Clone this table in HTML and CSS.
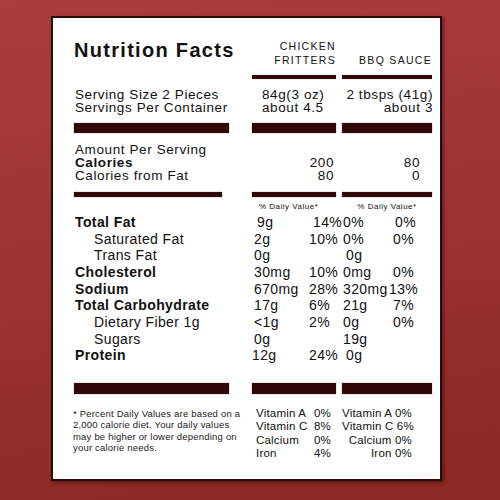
FILE: index.html
```html
<!doctype html>
<html lang="en">
  <head>
    <meta charset="UTF-8" />
    <title>Nutrition Facts</title>
    <link rel="stylesheet" href="styles.css">
  </head>

  <body>
    <div class="card">
      <div class="row head">
        <h1 class="c1 title">Nutrition Facts</h1>
        <div class="c2 colhead">CHICKEN<br />FRITTERS</div>
        <div class="c3 colhead bottom">BBQ SAUCE</div>
      </div>
      <div class="row gap_thin">
        <div class="c1"></div>
        <div class="c2 bar bar_thin"></div>
        <div class="c3 bar bar_thin"></div>
      </div>

      <div class="row serving">
        <div class="c1 label">Serving Size 2 Pieces<br />Servings Per Container</div>
        <div class="c2 serv_val">84g(3 oz)<br />about 4.5</div>
        <div class="c3 right">2 tbsps (41g)<br />about 3</div>
      </div>
      <div class="row gap_thick">
        <div class="c1 bar bar_thick"></div>
        <div class="c2 bar bar_thick"></div>
        <div class="c3 bar bar_thick"></div>
      </div>

      <div class="row calories">
        <div class="c1 label">
          Amount Per Serving<br /><b>Calories</b><br />Calories from Fat
        </div>
        <div class="c2 right cal2"><br />200<br />80</div>
        <div class="c3 right cal3"><br />80<br />0</div>
      </div>
      <div class="row gap_mid">
        <div class="c1"><div class="bar bar_mid short"></div></div>
        <div class="c2 bar bar_mid"></div>
        <div class="c3 bar bar_mid"></div>
      </div>

      <div class="row dv">
        <div class="c1"></div>
        <div class="c2 dv2">% Daily Value*</div>
        <div class="c3 dv3">% Daily Value*</div>
      </div>

      <div class="nutrients">
        <div class="nrow"><span class="name bold">Total Fat</span><span class="first">9g</span><span class="pct_first">14%</span><span>0%</span><span class="pct_bbq">0%</span></div>
        <div class="nrow"><span class="name sub">Saturated Fat</span><span>2g</span><span>10%</span><span>0%</span><span class="pct_bbq shift">0%</span></div>
        <div class="nrow"><span class="name sub">Trans Fat</span><span>0g</span><span></span><span class="nudge">0g</span><span></span></div>
        <div class="nrow"><span class="name bold">Cholesterol</span><span>30mg</span><span>10%</span><span>0mg</span><span class="pct_bbq shift">0%</span></div>
        <div class="nrow"><span class="name bold">Sodium</span><span>670mg</span><span>28%</span><span>320mg</span><span class="pct_bbq wide">13%</span></div>
        <div class="nrow"><span class="name bold">Total Carbohydrate</span><span>17g</span><span>6%</span><span>21g</span><span class="pct_bbq shift">7%</span></div>
        <div class="nrow"><span class="name sub">Dietary Fiber 1g</span><span>&lt;1g</span><span>2%</span><span>0g</span><span class="pct_bbq shift">0%</span></div>
        <div class="nrow"><span class="name sub">Sugars</span><span>0g</span><span></span><span>19g</span><span></span></div>
        <div class="nrow"><span class="name bold">Protein</span><span class="back">12g</span><span>24%</span><span class="nudge">0g</span><span></span></div>
      </div>
      <div class="row gap_bottom">
        <div class="c1 bar bar_bottom"></div>
        <div class="c2 bar bar_bottom"></div>
        <div class="c3 bar bar_bottom"></div>
      </div>

      <div class="row footer">
        <p class="c1 note">
          * Percent Daily Values are based on a<br />
          2,000 calorie diet. Your daily values<br />
          may be higher or lower depending on<br />
          your calorie needs.
        </p>
        <div class="c2 vit">
          <div class="vline"><span>Vitamin A</span><span>0%</span></div>
          <div class="vline"><span>Vitamin C</span><span>8%</span></div>
          <div class="vline"><span>Calcium</span><span>0%</span></div>
          <div class="vline"><span>Iron</span><span>4%</span></div>
        </div>
        <div class="c3 vit vit_right">
          <div>Vitamin A 0%</div>
          <div>Vitamin C 6%</div>
          <div>Calcium 0%</div>
          <div>Iron 0%</div>
        </div>
      </div>
    </div>
  </body>
</html>
```

FILE: styles.css
```css
html,
body {
  height: 100%;
}

body {
  margin: 0;
  background: linear-gradient(170deg, #a83d3d 0%, #9d3434 45%, #8a2822 100%);
  font-family: "Liberation Sans", Arial, sans-serif;
  color: #111;
}

.card {
  box-sizing: border-box;
  width: 391px;
  margin: 16px 0 0 51px;
  padding: 21px 8px 18px 21px;
  background-color: white;
  border: 2px solid #2a0b09;
  box-shadow: 2px 2px 3px rgba(40, 0, 0, 0.45);
}

.row {
  display: flex;
}

.c1 {
  width: 155px;
  margin: 0 23px 0 0;
  flex: none;
}

.c2 {
  width: 84px;
  margin-right: 6px;
  flex: none;
}

.c3 {
  width: 90px;
  flex: none;
}

.title {
  font-size: 20px;
  line-height: 22px;
  letter-spacing: 1.3px;
  font-weight: bold;
  white-space: nowrap;
}

.head {
  height: 28px;
}

.colhead {
  font-size: 10.5px;
  line-height: 14px;
  letter-spacing: 1.3px;
  text-align: right;
  white-space: nowrap;
}

.bottom {
  align-self: flex-end;
}

.bar {
  background-color: #310808;
  box-shadow: 0 0 1px rgba(49, 8, 8, 0.6);
}

.gap_thin {
  margin-top: 8px;
}

.bar_thin {
  height: 4px;
}

.serving,
.calories {
  font-size: 13.5px;
  line-height: 13px;
  letter-spacing: 0.6px;
  white-space: nowrap;
}

.serving {
  margin-top: 9px;
}

.label {
  padding-left: 1px;
}

.serv_val {
  padding-left: 9px;
  box-sizing: border-box;
}

.right {
  text-align: right;
}

.gap_thick {
  margin-top: 9px;
}

.bar_thick {
  height: 10px;
}

.calories {
  margin-top: 10px;
}

.cal2 {
  padding-right: 3px;
  box-sizing: border-box;
}

.cal3 {
  padding-right: 13px;
  box-sizing: border-box;
}

.gap_mid {
  margin-top: 10px;
}

.bar_mid {
  height: 5px;
}

.short {
  width: 148px;
}

.dv {
  margin-top: 5px;
  font-size: 8px;
  line-height: 10px;
  letter-spacing: 0.5px;
  white-space: nowrap;
}

.dv2 {
  padding-left: 7px;
  box-sizing: border-box;
}

.dv3 {
  text-align: center;
}

.nutrients {
  margin-top: 2px;
  font-size: 14px;
  letter-spacing: 0.4px;
  white-space: nowrap;
}

.nrow {
  display: grid;
  grid-template-columns: 180px 55px 34px 48px 41px;
  height: 16.67px;
  line-height: 16.67px;
}

.name {
  padding-left: 1px;
}

.bold {
  font-weight: bold;
}

.sub {
  padding-left: 20px;
}

.first {
  padding-left: 3px;
}

.pct_first {
  padding-left: 4px;
}

.pct_bbq {
  padding-left: 4px;
}

.shift {
  padding-left: 2px;
}

.wide {
  margin-left: -6px;
}

.nudge {
  padding-left: 3px;
}

.back {
  margin-left: -2px;
}

.gap_bottom {
  margin-top: 19px;
}

.bar_bottom {
  height: 11px;
}

.footer {
  margin-top: 13px;
}

.note {
  padding: 1px 0 0;
  margin-left: -1px;
  margin-right: 24px;
  font-size: 9.5px;
  line-height: 11.5px;
  letter-spacing: 0.2px;
  color: #222;
  white-space: nowrap;
}

.vit {
  font-size: 11.5px;
  line-height: 13.5px;
  letter-spacing: 0.2px;
  white-space: nowrap;
}

.c2.vit {
  padding: 0 5px 0 4px;
  box-sizing: border-box;
}

.vline {
  display: flex;
  justify-content: space-between;
}

.vit_right {
  text-align: right;
  padding-right: 20px;
  box-sizing: border-box;
}
```
